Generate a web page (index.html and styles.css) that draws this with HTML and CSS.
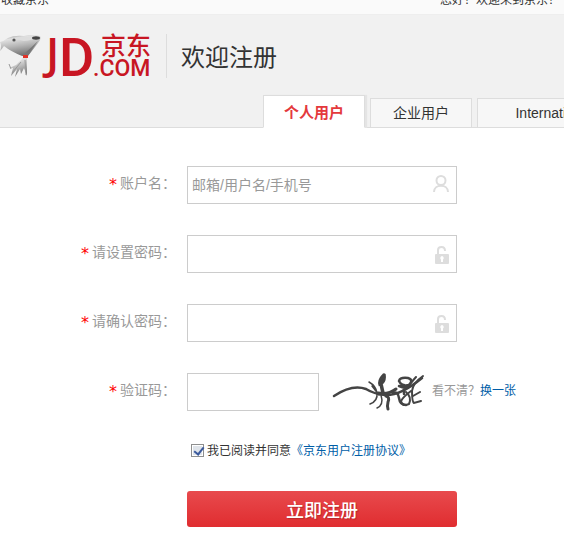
FILE: index.html
```html
<!DOCTYPE html>
<html lang="zh-CN">
<head>
  <meta charset="UTF-8">
  <meta name="viewport" content="width=device-width, initial-scale=1.0">
  <title>欢迎注册</title>
  <link rel="stylesheet" href="styles.css">
</head>
<body>

  <div class="topbar">
    <span>收藏京东</span>
    <span>您好！欢迎来到京东！</span>
  </div>

  <header class="header">
    <div class="brand">
      <svg class="logo" width="154" height="46" viewBox="0 0 154 46" role="img" aria-label="京东 JD.COM">
        <defs>
          <linearGradient id="metal" x1="0" y1="0" x2="0.3" y2="1">
            <stop offset="0" stop-color="#888"></stop>
            <stop offset="0.25" stop-color="#e2e2e2"></stop>
            <stop offset="0.6" stop-color="#b5b5b5"></stop>
            <stop offset="1" stop-color="#777"></stop>
          </linearGradient>
        </defs>
        <!-- 吉祥物 -->
        <path d="M0 9 Q4 8 8 5 Q14 2 24 3 Q34 1 40 3 Q42 5 38 10 L28 23 L22 23 Q10 18 4 13 Q2 16 0 18 Q2 13 0 9Z" fill="url(#metal)"></path>
        <path d="M8 7 Q20 2 35 4 Q34 7 24 8 Q14 5 8 7Z" fill="#ddd"></path>
        <path d="M38 8 L28 22 L25 20 Q32 14 38 8Z" fill="#777"></path>
        <ellipse cx="36" cy="5" rx="4" ry="1.7" fill="#444"></ellipse>
        <circle cx="14" cy="7" r="1.6" fill="#555"></circle>
        <path d="M23 25 L27 25 L27 43 L24 35 L21 41 L20 36 L15 44 L17 36 L11 43 L13 35 L9 35 L16 32Z" fill="url(#metal)"></path>
        <path d="M9 31 L11 36 M12 40 L21 29 M25 27 L26 42" fill="none" stroke="#999" stroke-width="1"></path>
        <rect x="23" y="22" width="5" height="3" fill="#e13228"></rect>
        <text class="logo-j" x="46" y="36">J</text>
        <text class="logo-d" x="59" y="43">D</text>
        <text class="logo-cn" x="101" y="22">京东</text>
        <text class="logo-com" x="93" y="43">.COM</text>
      </svg>
      <h1 class="title">欢迎注册</h1>
    </div>
    <nav class="tabs">
      <a class="tab active" href="#">个人用户</a>
      <a class="tab" href="#">企业用户</a>
      <a class="tab tab-wide" href="#">International</a>
    </nav>
  </header>

  <form class="form">
    <div class="row">
      <label class="label" for="username"><b>*</b>账户名：</label>
      <div class="field">
        <input class="input" type="text" id="username" placeholder="邮箱/用户名/手机号">
        <svg class="icon" width="18" height="20" viewBox="0 0 18 20">
          <circle cx="9" cy="5.500" r="4.500"></circle>
          <path d="M2 17 C2 8.500 16 8.500 16 17"></path>
        </svg>
      </div>
    </div>

    <div class="row">
      <label class="label" for="pwd"><b>*</b>请设置密码：</label>
      <div class="field">
        <input class="input" type="password" id="pwd">
        <svg class="icon" width="18" height="20" viewBox="0 0 18 20">
          <path d="M6 11 V6 Q6 3 9.500 3 Q13 3 13 7"></path>
          <path class="solid" d="M4 10 H16 Q17 10 17 11 V19 Q17 20 16 20 H4 Q3 20 3 19 V11 Q3 10 4 10Z"></path>
          <path class="hole" d="M10 12 A2 2 0 0 1 11 15.500 V18 H9 V15.500 A2 2 0 0 1 10 12Z"></path>
        </svg>
      </div>
    </div>

    <div class="row">
      <label class="label" for="pwd2"><b>*</b>请确认密码：</label>
      <div class="field">
        <input class="input" type="password" id="pwd2">
        <svg class="icon" width="18" height="20" viewBox="0 0 18 20">
          <path d="M6 11 V6 Q6 3 9.500 3 Q13 3 13 7"></path>
          <path class="solid" d="M4 10 H16 Q17 10 17 11 V19 Q17 20 16 20 H4 Q3 20 3 19 V11 Q3 10 4 10Z"></path>
          <path class="hole" d="M10 12 A2 2 0 0 1 11 15.500 V18 H9 V15.500 A2 2 0 0 1 10 12Z"></path>
        </svg>
      </div>
    </div>

    <div class="row">
      <label class="label" for="code"><b>*</b>验证码：</label>
      <input class="input input-code" type="text" id="code">
      <!-- 验证码图片 -->
      <svg class="captcha" width="94" height="38" viewBox="0 0 94 38">
        <path d="M4 23 Q22 11 36 16 Q44 21 55 22 Q70 23 92 5" stroke-width="2.500"></path>
        <path d="M39 9 Q46 13 47 20 Q48 28 40 31 M42 13 L49 22 M51 22 Q54 32 47 35" stroke-width="1.500"></path>
        <path d="M54 2 Q49 7 50 11 Q55 9 54 2 M51 11 L53 20" stroke-width="3.500"></path>
        <path d="M48 20 Q58 22 66 16 M56 23 Q60 24 58 29 Q57 33 58 36" stroke-width="3"></path>
        <path d="M63 20 Q68 18 69 25 Q70 32 76 32" stroke-width="2.500"></path>
        <path d="M69 8 Q70 4 78 5 Q84 7 79 12 Q72 14 69 8 M69 13 Q78 17 80 11 M74 12 V21" stroke-width="2.500"></path>
        <path d="M76 19 Q82 24 79 31 Q72 34 71 28 Q73 24 81 18" stroke-width="2"></path>
        <path d="M93 3 Q83 10 82 18 Q82 29 84 30 L91 28 M80 11 L86 4 M83 23 L90 19" stroke-width="2"></path>
      </svg>
      <span class="hint">看不清？<a href="#">换一张</a></span>
    </div>

    <div class="row terms">
      <input class="check" type="checkbox" id="agree" checked>
      <label for="agree">我已阅读并同意</label><a href="#">《京东用户注册协议》</a>
    </div>

    <div class="row submit">
      <button class="btn" type="button">立即注册</button>
    </div>
  </form>

</body>
</html>
```

FILE: styles.css
```css
* {
  box-sizing: border-box;
}

body {
  margin: 0;
  background-color: #fff;
  color: #333;
  font: 12px/18px "Liberation Sans", "Noto Sans CJK SC", sans-serif;
  overflow-x: hidden;
}

a {
  color: #005ea7;
  text-decoration: none;
}

/* 顶部栏 */
.topbar {
  display: flex;
  justify-content: space-between;
  align-items: flex-end;
  height: 14px;
  padding: 0 4px 0 1px;
  line-height: 28px;
  background-color: #fafafa;
  overflow: hidden;
}

.header {
  background-color: #f1f1f1;
  border-top: 1px solid #eee;
  border-bottom: 1px solid #ddd;
}

.brand {
  display: flex;
  align-items: center;
  padding-top: 18px;
}

.logo {
  flex: none;
}

.logo text {
  fill: #c81623;
}

.logo-j {
  font: 600 44px "Open Sans", sans-serif;
}

.logo-d {
  font: 500 54px Roboto, sans-serif;
}

.logo-cn {
  font: 500 25px "Noto Sans CJK SC", sans-serif;
}

.logo-com {
  font: 500 23px Roboto, sans-serif;
}

.title {
  margin: 0 0 0 12px;
  padding-left: 14px;
  border-left: 1px solid #ddd;
  font: 24px/44px "Noto Sans CJK SC", sans-serif;
}

/* 标签页 */
.tabs {
  display: flex;
  align-items: flex-end;
  gap: 5px;
  padding: 16px 0 0 263px;
  margin-bottom: -1px;
  overflow: hidden;
}

.tab {
  flex: none;
  width: 102px;
  height: 30px;
  border: 1px solid #ddd;
  background-color: #f7f7f7;
  color: #333;
  font-size: 14px;
  line-height: 29px;
  text-align: center;
}

.tab.active {
  height: 33px;
  border-bottom-color: #fff;
  background-color: #fff;
  box-shadow: 2px 0 1px #e4e4e4;
  color: #e4393c;
  font-size: 15px;
  font-weight: bold;
  line-height: 33px;
}

.tab-wide {
  width: 154px;
}

/* 注册表单 */
.form {
  display: flex;
  flex-direction: column;
  gap: 31px;
  padding: 38px 0 28px;
}

.row {
  display: flex;
  align-items: center;
}

.label {
  width: 176px;
  margin-right: 11px;
  padding-bottom: 2px;
  color: #999;
  font-size: 14px;
  text-align: right;
}

.label b {
  margin-right: 3px;
  color: #f00;
  font-family: "DejaVu Sans", sans-serif;
  font-size: 16px;
  font-weight: normal;
  vertical-align: -2px;
}

.field {
  position: relative;
}

.input {
  display: block;
  width: 270px;
  height: 38px;
  padding: 0 30px 0 4px;
  border: 1px solid #ccc;
  font: 14px "Liberation Sans", "Noto Sans CJK SC", sans-serif;
}

.input::placeholder {
  color: #999;
}

.input-code {
  width: 132px;
  padding-right: 4px;
}

.icon {
  position: absolute;
  top: 9px;
  right: 7px;
  fill: none;
  stroke: #ddd;
  stroke-width: 2;
}

.icon .solid {
  fill: #ddd;
  stroke: none;
}

.icon .hole {
  fill: #fff;
  stroke: none;
}

.captcha {
  margin: 0 8px 0 11px;
  fill: none;
  stroke: #444;
  stroke-linecap: round;
}

.hint {
  padding-bottom: 2px;
  color: #999;
  white-space: nowrap;
}

.terms {
  padding-left: 191px;
}

.check {
  width: 13px;
  height: 13px;
  margin: 0 3px 2px 0;
  appearance: none;
  border: 1px solid #8e8f8f;
  background: #dfe4ea;
  outline: 1px solid #fff;
  outline-offset: -2px;
}

/* 对勾 */
.check:checked::after {
  content: "";
  display: block;
  width: 4px;
  height: 8px;
  margin: 0 0 0 4px;
  border: solid #3b5a9d;
  border-width: 0 2px 2px 0;
  transform: rotate(38deg);
}

.submit {
  padding-left: 187px;
}

.btn {
  width: 270px;
  height: 36px;
  padding: 0;
  border: none;
  border-radius: 3px;
  background: linear-gradient(#e84a4d, #e02d30);
  color: #fff;
  font: 500 18px/36px "Noto Sans CJK SC", sans-serif;
  text-shadow: 1px 1px 1px #b8282b;
  cursor: pointer;
}
```
